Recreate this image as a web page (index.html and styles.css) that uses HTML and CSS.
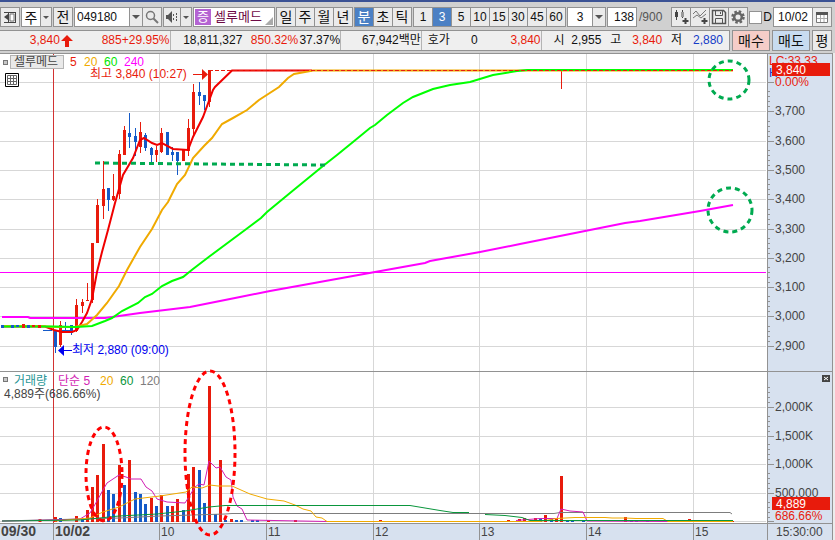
FILE: index.html
```
<!DOCTYPE html>
<html lang="ko">
<head>
    <meta charset="UTF-8">
    <meta name="viewport" content="width=device-width, initial-scale=1.0">
    <title>셀루메드 분봉 차트</title>
    <link rel="stylesheet" href="styles.css">
</head>
<body>
    <div class="toolbar">
        <button class="btn" aria-label="패널">
            <svg width="14" height="14" viewBox="0 0 14 14"><path d="M1 2.5H13M1 12.5H13M5.5 2V13M12.5 2V13" stroke="#444" fill="none"/><path d="M1 7L5 4V10Z" fill="#444"/><path d="M7 4H11V11H7Z" fill="#fff" stroke="#777"/></svg>
        </button>
        <div class="combo">
            <input class="w-type" type="text" value="주" aria-label="종목 구분">
            <button class="arrow slim" aria-label="구분 선택"></button>
        </div>
        <button class="btn ko">전</button>
        <div class="combo">
            <input class="w-code" type="text" value="049180" aria-label="종목코드">
            <button class="arrow" aria-label="최근 종목"></button>
            <button class="btn" aria-label="종목 검색">
                <svg width="14" height="14" viewBox="0 0 14 14"><circle cx="5.5" cy="5.5" r="4" fill="none" stroke="#777" stroke-width="1.5"/><path d="M8.500 8.500L13 13" stroke="#777" stroke-width="2"/></svg>
            </button>
        </div>
        <div class="combo">
            <button class="btn sound" aria-label="소리">
                <svg width="14" height="14" viewBox="0 0 14 14"><path d="M1 5H3L7 1V13L3 9H1Z" fill="#555"/><path d="M8 5H9M8 9H9M11 4H12M11 7H12M11 10H12" stroke="#555" stroke-width="2"/></svg>
            </button>
            <button class="arrow slim" aria-label="소리 설정"></button>
        </div>
        <div class="stock"><span class="tag">증</span><span>셀루메드</span></div>
        <div class="group">
            <button class="btn ko">일</button>
            <button class="btn ko">주</button>
            <button class="btn ko">월</button>
            <button class="btn ko">년</button>
        </div>
        <div class="group">
            <button class="btn ko on">분</button>
            <button class="btn ko">초</button>
            <button class="btn ko">틱</button>
        </div>
        <div class="group">
            <button class="btn">1</button>
            <button class="btn on">3</button>
            <button class="btn">5</button>
            <button class="btn">10</button>
            <button class="btn">15</button>
            <button class="btn">30</button>
            <button class="btn">45</button>
            <button class="btn">60</button>
        </div>
        <div class="combo">
            <input class="w-min" type="text" value="3" aria-label="분 주기">
            <button class="arrow" aria-label="주기 선택"></button>
        </div>
        <div class="combo">
            <input class="w-count" type="text" value="138" aria-label="봉 개수">
            <span class="total">/900</span>
        </div>
        <div class="group tools">
            <button class="btn" aria-label="차트 유형 추가">
                <svg width="16" height="16" viewBox="0 0 16 16"><path d="M3.500 1V11M9.500 1V9" stroke="#444"/><path d="M2 3H5V8H2Z" fill="#444"/><path d="M8 3H11V8H8Z" fill="#999"/><path d="M12.500 9V15M9.500 12H15.500" stroke="#444" stroke-width="2"/></svg>
            </button>
            <button class="btn" aria-label="지표 추가">
                <svg width="16" height="16" viewBox="0 0 16 16"><path d="M1 5L4 2L8 7L14 1M1 9L5 6L9 9L14 5" stroke="#777" fill="none"/><path d="M12.500 9V15M9.500 12H15.500" stroke="#444" stroke-width="2"/></svg>
            </button>
            <button class="btn" aria-label="저장">
                <svg width="16" height="16" viewBox="0 0 16 16"><path d="M1.500 1.500H12.500L14.500 3.500V14.500H1.500Z" fill="none" stroke="#555" stroke-width="1.500"/><path d="M4.500 2V6.500H11.500V2M4.500 14V9.500H11.500V14M9.500 3V5" fill="none" stroke="#555"/></svg>
            </button>
            <button class="btn" aria-label="설정">
                <svg width="16" height="16" viewBox="0 0 16 16"><circle cx="8" cy="8" r="5.500" fill="none" stroke="#666" stroke-width="2.500" stroke-dasharray="2.500 1.820"/><circle cx="8" cy="8" r="3.800" fill="none" stroke="#666" stroke-width="2.500"/></svg>
            </button>
        </div>
        <label class="check"><input type="checkbox">D</label>
        <div class="combo">
            <input class="w-date" type="text" value="10/02" aria-label="날짜">
            <button class="btn" aria-label="달력">
                <svg width="12" height="12" viewBox="0 0 12 12"><path d="M0.500 1.500H11.500V11.500H0.500Z" fill="#fff" stroke="#777"/><path d="M0 1H12V4H0Z" fill="#555"/><path d="M4.500 4V11M8 4V11M1 7.500H11" stroke="#aaa"/></svg>
            </button>
        </div>
    </div>

    <div class="quote-row">
        <div class="quote">
            <span class="up">3,840</span>
            <svg width="14" height="12" viewBox="0 0 14 12"><path d="M7 0L13 6H9V12H5V6H1Z" fill="#e81b0c"/></svg>
            <span class="up">885</span>
            <span class="up">+29.95%</span>
            <span class="sep">18,811,327</span>
            <span class="up">850.32%</span>
            <span>37.37%</span>
            <span class="sep">67,942백만</span>
            <span class="sep">호가</span>
            <span>0</span>
            <span class="up">3,840</span>
            <span class="sep">시</span>
            <span>2,955</span>
            <span>고</span>
            <span class="up">3,840</span>
            <span>저</span>
            <span class="down">2,880</span>
        </div>
        <button class="btn ko buy">매수</button>
        <button class="btn ko sell">매도</button>
        <button class="btn ko">평</button>
    </div>

    <svg class="chart" viewBox="0 53 835 487" role="img" aria-label="셀루메드 3분봉 차트">
        <!-- panels -->
        <rect x="0" y="53" width="835" height="487" fill="#ececec"/>
        <rect x="0" y="54" width="767" height="469" fill="#fff"/>
        <rect x="768" y="54" width="64" height="486" fill="#d7e1ef"/>
        <rect x="0" y="523" width="768" height="17" fill="#d7e1ef"/>

        <!-- grid -->
        <path class="grid" d="M0 82.5H766M0 111.500H766M0 141.500H766M0 170.500H766M0 199.500H766M0 229.500H766M0 258.500H766M0 287.500H766M0 316.500H766M0 346.500H766M0 407.500H766M0 436.500H766M0 464.500H766M0 493.500H766M0 521.500H766"/>
        <path class="grid" d="M159.500 54V523M266.500 54V523M373.500 54V523M479.500 54V523M586.500 54V523M693.500 54V523"/>
        <path d="M53.500 54V523" stroke="#d23232"/>
        <path d="M0 272.500H766" stroke="#ff00ff"/>

        <!-- volume bars -->
        <path class="bar red" d="M40 519V522M55.500 517V522M76.500 516V522M87.500 510V522M92.500 487V522M97.500 475V522M103.500 444V522M119.500 465V522M129.500 460V522M151.500 498V522M161.500 495V522M172.500 506V522M177.500 499V522M188.500 474V522M193.500 467V522M209.500 386V522M220.500 460V522M231.500 519V522M268.500 520V522M295.500 520V522M380.500 520V522M508.500 520V522M519.500 519V522M524.500 518V522M535.500 518V522M545.500 515V522M556.500 518V522M561.500 476V522M625.500 517V522M689.500 519V522M732.500 521V522"/>
        <path class="bar blue" d="M60.500 518V522M82.500 519V522M108.500 490V522M113.500 494V522M124.500 485V522M135.500 492V522M140.500 494V522M145.500 504V522M156.500 506V522M167.500 506V522M183.500 510V522M199.500 470V522M204.500 503V522M215.500 514V522M225.500 520V522M236.500 520V522M241.500 520V522M252.500 520V522M257.500 520V522M540.500 519V522M551.500 519V522M567.500 520V522M572.500 520V522M583.500 520V522M631.500 520V522M636.500 520V522M647.500 520V522"/>

        <!-- volume averages -->
        <path class="thin" stroke="#7d7d7d" d="M2 521L120 518L160 516L225 514L232 513.500H554L560 512.500H730L732 514"/>
        <path class="thin" stroke="#d21eb4" d="M2 521L55 520L80 519L90 513L97 501L103 490L107 483L113 479L119 475L126 477L131 479H141L146 487L152 491L157 499L167 502L185 503L190 495L195 487L199 484L204 485L209 461L216 468L220 467L226 477L231 480L233 497L237 506L242 509L247 520L327 521.500M516 520.500L540 518.500H557L561 509L570 511L583 512L587 521L668 521.500"/>
        <path class="thin" stroke="#f0aa00" d="M55 521L90 518L103 512L119 507L135 499L160 496L186 492L192 487L202 488L210 485L218 486L232 486L250 494L267 499L284 501L295 505L303 509L311 511L316 517L322 518L327 521.500H540L556 518.500L575 517.500H605L612 518H625L636 518.500H663L668 521.500H733"/>
        <path class="thin" stroke="#0a963c" d="M2 521L80 520L119 516L157 514L185 511L209 507L225 505.500H410L425 508L440 510.500L453 512.500H469M485 514.500L505 515.500L522 517.500L530 520.500H733"/>

        <!-- candles -->
        <path class="wick red" d="M60.500 321V347M76.500 299V332M82.500 299V313M87.500 283V300M92.500 243V303M97.500 199V243M103.500 161V219M113.500 174V201M119.500 150V199M124.500 126V155M140.500 122V153M156.500 146V162M161.500 128V153M188.500 119V156M193.500 84V135M209.500 70V107M561.500 71V89"/>
        <path class="wick blue" d="M55.500 330V353M65.500 322V331M71.500 325V335M108.500 188V211M129.500 113V148M135.500 128V156M145.500 133V151M151.500 147V163M172.500 147V161M177.500 152V175M199.500 82V105M204.500 95V110M43 330.500H52M62 330.500H70"/>
        <path class="bar red" d="M60.500 325V345M76.500 305V331M82.500 302V306M87.500 300V301M92.500 243V300M97.500 205V243M103.500 189V206M113.500 196V200M119.500 154V194M124.500 130V155M140.500 132V147M156.500 150V155M161.500 133V152M183.500 150V161M188.500 128V151M193.500 92V129M209.500 70V102"/>
        <path class="bar blue" d="M55.500 330V347M71.500 325V333M108.500 188V200M129.500 133V137M135.500 136V142M145.500 135V148M151.500 148V155M167.500 132V155M172.500 152V155M177.500 152V161M199.500 92V96M204.500 95V101"/>

        <!-- price averages -->
        <path class="avg" stroke="#ff00ff" d="M2 317H28L30 318H105L112 317L140 313L165 310L190 307L210 303L240 297L270 291L375 272L425 263L430 261L480 252L520 244L530 242L560 236L625 223L640 221L700 211L733 205"/>
        <path class="avg" stroke="#f00000" d="M2 326.500H45L54 330L62 332H72L77 330L82 322L87 313L92 299L97 272L102 252L108 230L115 203L123 175L133 158L140 140L144 138L152 143L157 145L162 143L173 149L188 150L193 137L203 117L213 90L215 87L232 70.500H312"/>
        <path class="avg" stroke="#f0aa00" d="M2 326H40L55 327H75L87 324L97 315L107 303L119 286L127 270L140 247L152 229L162 210L168 202L177 184L185 175L193 158L204 146L212 138L222 124L233 118L247 110L259 100L279 87L288 78L294 74L305 72L313 70.500H733"/>
        <path class="avg" stroke="#00ff00" d="M2 326.500H55L76 327L92 326L105 321L112 318L122 311L138 303L145 297L152 294L162 286L172 281L183 277L193 269L210 256L245 230L261 218L267 212L290 193L323 166L337 155L353 142L370 128L375 125L387 115L403 103L413 97L433 89L450 85L470 82L493 75L517 71L527 70H733"/>
        <path class="bar red" d="M23.500 324V328M33.500 325V327M39.500 325V328"/>
        <path class="bar blue" d="M2.500 325V328M12.500 325V328M17.500 325V327M28.500 325V328"/>
        <path d="M209 70.500H733" stroke="#e81b0c" stroke-dasharray="4 2"/>

        <!-- hand-drawn marks -->
        <path class="mark green" d="M95 163L325 165"/>
        <ellipse class="mark green" cx="729" cy="80" rx="20" ry="19"/>
        <ellipse class="mark green" cx="730" cy="210" rx="22" ry="22"/>

        <!-- frame -->
        <path class="frame" d="M0 53.500H833M0 371.500H833M0 523.500H833M767.500 54V540M832.500 54V540M53.500 524V540M159.500 524V540M266.500 524V540M373.500 524V540M479.500 524V540M586.500 524V540M693.500 524V540"/>
        <path class="frame" d="M768 82.500H774M768 111.500H774M768 141.500H774M768 170.500H774M768 199.500H774M768 229.500H774M768 258.500H774M768 287.500H774M768 316.500H774M768 346.500H774M768 407.500H774M768 436.500H774M768 464.500H774M768 493.500H774M768 521.500H774"/>
        <path class="frame" d="M768 91.500H770M768 96.500H770M768 101.500H770M768 106.500H770M768 121.500H770M768 126.500H770M768 131.500H770M768 136.500H770M768 150.500H770M768 155.500H770M768 160.500H770M768 165.500H770M768 179.500H770M768 184.500H770M768 189.500H770M768 194.500H770M768 209.500H770M768 214.500H770M768 219.500H770M768 224.500H770M768 238.500H770M768 243.500H770M768 248.500H770M768 253.500H770M768 267.500H770M768 272.500H770M768 277.500H770M768 282.500H770M768 296.500H770M768 301.500H770M768 306.500H770M768 311.500H770M768 326.500H770M768 331.500H770M768 336.500H770M768 341.500H770M768 387.500H770M768 392.500H770M768 397.500H770M768 402.500H770M768 416.500H770M768 421.500H770M768 426.500H770M768 431.500H770M768 444.500H770M768 449.500H770M768 454.500H770M768 459.500H770M768 473.500H770M768 478.500H770M768 483.500H770M768 488.500H770M768 502.500H770M768 507.500H770M768 512.500H770M768 517.500H770"/>

        <!-- price axis -->
        <g class="axis">
            <text x="775" y="115">3,700</text>
            <text x="775" y="145">3,600</text>
            <text x="775" y="174">3,500</text>
            <text x="775" y="203">3,400</text>
            <text x="775" y="233">3,300</text>
            <text x="775" y="262">3,200</text>
            <text x="775" y="291">3,100</text>
            <text x="775" y="320">3,000</text>
            <text x="775" y="350">2,900</text>
            <text x="775" y="411">2,000K</text>
            <text x="775" y="440">1,500K</text>
            <text x="775" y="468">1,000K</text>
            <text x="775" y="497">500,000</text>
            <text x="776" y="536">15:30:00</text>
        </g>
        <text class="t-red" x="769" y="65">LC:33.33</text>
        <text class="t-blue" x="769" y="77">H</text>
        <text class="t-red" x="775" y="86">0.00%</text>
        <rect x="772" y="63" width="58" height="13" fill="#e81b0c"/>
        <text class="t-white" x="776" y="74">3,840</text>
        <text class="t-red" x="775" y="520">686.66%</text>
        <rect x="772" y="497" width="58" height="13" fill="#e81b0c"/>
        <text class="t-white" x="776" y="508">4,889</text>
        <rect x="822" y="375" width="8" height="7" fill="#444"/>
        <path d="M824 377L828 380M828 377L824 380" stroke="#fff"/>

        <!-- time axis -->
        <g class="axis">
            <text class="day" x="1" y="536">09/30</text>
            <text class="day" x="55" y="536">10/02</text>
            <text x="161" y="536">10</text>
            <text x="268" y="536">11</text>
            <text x="375" y="536">12</text>
            <text x="481" y="536">13</text>
            <text x="588" y="536">14</text>
            <text x="695" y="536">15</text>
        </g>
        <ellipse class="mark" cx="104" cy="474" rx="18" ry="47"/>
        <ellipse class="mark" cx="210" cy="453" rx="25" ry="82"/>

        <!-- legends -->
        <rect class="box" x="3.500" y="60.500" width="4" height="4"/>
        <rect x="10.500" y="55.500" width="53" height="13" fill="#e9e9e9" stroke="#b4b4b4"/>
        <text class="axis" x="14" y="66">셀루메드</text>
        <text class="t-red" x="70" y="66">5</text>
        <text x="84" y="66" fill="#f0aa00">20</text>
        <text x="104" y="66" fill="#00e600">60</text>
        <text x="124" y="66" fill="#ff00ff">240</text>
        <path d="M5.500 73.500H18.500V86.500H5.500Z" fill="#fff" stroke="#000"/>
        <path d="M7.500 75.500H16.500V84.500H7.500ZM7 78.500H17M7 81.500H17M10.500 75V85M13.500 75V85" fill="none" stroke="#666"/>
        <text class="t-red" x="90" y="78">최고 3,840 (10:27)</text>
        <path d="M193 74.500H203" stroke="#e81b0c"/>
        <path d="M202 69L208 74.500L202 80Z" fill="#e81b0c"/>
        <text x="72" y="354" fill="#0000f0">최저 2,880 (09:00)</text>
        <path d="M63 350.500H72" stroke="#0000f0"/>
        <path d="M64 345L58 350.500L64 356Z" fill="#0000f0"/>

        <rect class="box" x="3.500" y="377.500" width="4" height="4"/>
        <text x="14" y="385" fill="#289696">거래량</text>
        <text x="58" y="385" fill="#d21eb4">단순 5</text>
        <text x="100" y="385" fill="#f0aa00">20</text>
        <text x="120" y="385" fill="#0a963c">60</text>
        <text x="140" y="385" fill="#7d7d7d">120</text>
        <text class="axis" x="4" y="398">4,889주(686.66%)</text>
    </svg>
</body>
</html>
```
FILE: styles.css
```
* {
    box-sizing: border-box;
    font-family: "Liberation Sans", "Noto Sans CJK KR", sans-serif;
}
body {
    margin: 0;
    background: #d0d0d0;
    border-top: 2px solid #3b5294;
    font-size: 12px;
    color: #111;
}
button,
input {
    margin: 0;
    padding: 0;
    font-size: 12px;
    color: #111;
    border: 1px solid #929292;
    border-radius: 0;
}
.toolbar {
    display: flex;
    align-items: center;
    gap: 1px;
    height: 28px;
    padding: 3px 3px 1px 0;
}
.btn {
    display: flex;
    align-items: center;
    justify-content: center;
    flex: none;
    width: 20px;
    height: 20px;
    background: #ebebeb;
    line-height: 18px;
    cursor: pointer;
}
.btn.on {
    background: #4b80c4;
    color: #fff;
}
.ko {
    font-size: 14px;
}
.combo,
.group {
    display: flex;
    align-items: center;
    flex: none;
}
.combo > * + *,
.group > * + * {
    margin-left: -1px;
}
.combo input {
    height: 20px;
    background: #fff;
}
.w-type {
    width: 20px;
    font-size: 14px;
    text-align: center;
}
.w-code {
    width: 56px;
    padding-left: 2px;
}
.w-min {
    width: 26px;
    text-align: center;
}
.w-count {
    width: 30px;
    padding-right: 2px;
    text-align: right;
}
.w-date {
    width: 40px;
    text-align: center;
}
.arrow {
    display: flex;
    align-items: center;
    justify-content: center;
    width: 14px;
    height: 20px;
    background: #ebebeb;
}
.arrow::before {
    content: "";
    border: 4px solid transparent;
    border-top-color: #555;
    border-bottom: 0;
}
.sound {
    width: 18px;
}
.slim {
    width: 12px;
}
.slim::before {
    border-width: 3px;
    border-bottom: 0;
}
.stock {
    position: relative;
    display: flex;
    align-items: center;
    flex: none;
    gap: 3px;
    width: 82px;
    height: 20px;
    padding-left: 1px;
    background: #fff;
    border: 1px solid #929292;
    color: #6e0a46;
    font-size: 13px;
    line-height: 16px;
    white-space: nowrap;
}
.stock::after {
    content: "";
    position: absolute;
    right: 1px;
    bottom: 1px;
    border: 4px solid #aaa;
    border-top-color: transparent;
    border-left-color: transparent;
}
.tag {
    width: 16px;
    background: #b464d2;
    color: #fff;
    text-align: center;
}
.total {
    padding-left: 3px;
    color: #555;
}
.tools {
    margin-left: auto;
}
.check {
    display: flex;
    align-items: center;
    gap: 1px;
}
.check input {
    appearance: none;
    width: 13px;
    height: 13px;
    background: #fff;
    border: 1px solid #929292;
}
.quote-row {
    display: flex;
    gap: 2px;
    height: 23px;
    padding-right: 3px;
}
.quote {
    flex: 1;
    display: grid;
    grid-template-columns: 60fr 14fr 48fr 48fr 73fr 56fr 42fr 81fr 29fr 28fr 63fr 24fr 37fr 20fr 41fr 20fr 41fr;
    align-items: center;
    height: 21px;
    background: #efefef;
    border: 1px solid #929292;
    border-left: 0;
    padding-right: 6px;
    line-height: 19px;
    text-align: right;
    white-space: nowrap;
}
.quote > * {
    min-width: 0;
}
.sep {
    border-left: 1px solid #b4b4b4;
}
.up {
    color: #e81b0c;
}
.down {
    color: #143cc8;
}
.buy,
.sell {
    width: 38px;
}
.quote-row .btn {
    height: 21px;
}
.quote-row .buy {
    background: #f5cdc8;
}
.quote-row .sell {
    background: #c8dcf0;
}
.chart {
    display: block;
    width: 100%;
    height: auto;
    font-size: 12px;
}
.grid {
    stroke: #d7d7d7;
}
.frame {
    stroke: #929292;
}
.bar {
    stroke-width: 3;
}
.red {
    stroke: #e81b0c;
}
.blue {
    stroke: #145ac8;
}
.avg {
    fill: none;
    stroke-width: 2;
}
.thin {
    fill: none;
}
.mark {
    fill: none;
    stroke: #f00;
    stroke-width: 3;
    stroke-dasharray: 5 4;
}
.mark.green {
    stroke: #00aa50;
}
.box {
    fill: #c8c8c8;
    stroke: #777;
}
.axis {
    fill: #444;
}
.day {
    font-size: 14px;
    font-weight: bold;
}
.t-red {
    fill: #e81b0c;
}
.t-blue {
    fill: #143cc8;
}
.t-white {
    fill: #fff;
}
```
